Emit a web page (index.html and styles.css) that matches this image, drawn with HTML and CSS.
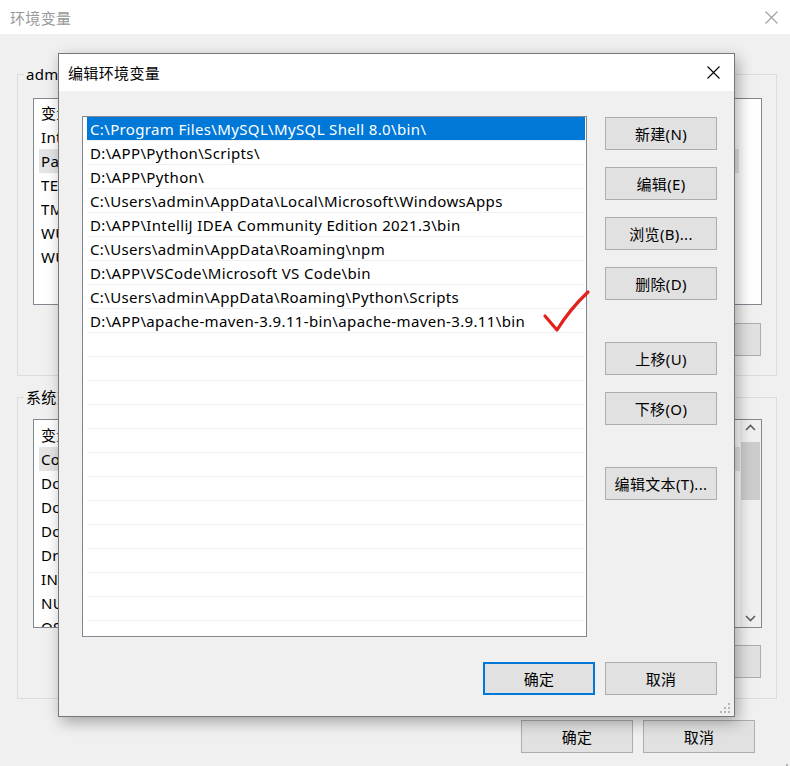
FILE: index.html
```html
<!DOCTYPE html>
<html lang="zh-CN">
<head>
  <meta charset="UTF-8">
  <meta name="viewport" content="width=device-width, initial-scale=1.0">
  <title>环境变量</title>
  <link rel="stylesheet" href="styles.css">
</head>
<body>
  <!-- the parent window: 环境变量 -->
  <div class="window">
    <div class="titlebar">
      <span class="title">环境变量</span>
      <svg class="close" width="13" height="13" viewBox="0 0 13 13"><path d="M0.5 0.5 L12.5 12.5 M12.5 0.5 L0.5 12.5" stroke="#a0a0a0" stroke-width="1.1"/></svg>
    </div>
    <div class="content">
      <fieldset class="group">
        <legend>admin 的用户变量(U)</legend>
        <div class="varlist">
          <div class="varrow"><span class="col-name">变量</span><span>值</span></div>
          <div class="varrow"><span class="col-name">IntelliJ IDEA Community Edition</span><span>D:\APP\IntelliJ IDEA 2021.3\bin;</span></div>
          <div class="varrow sel"><span class="col-name">Path</span><span>C:\Program Files\MySQL\MySQL Shell 8.0\bin\;</span></div>
          <div class="varrow"><span class="col-name">TEMP</span><span>%USERPROFILE%\AppData\Local\Temp</span></div>
          <div class="varrow"><span class="col-name">TMP</span><span>%USERPROFILE%\AppData\Local\Temp</span></div>
          <div class="varrow"><span class="col-name">WUBI_HOME</span><span>D:\APP\Wubi</span></div>
          <div class="varrow"><span class="col-name">WUBI_DATA</span><span>D:\APP\Wubi\data</span></div>
        </div>
        <div class="group-buttons">
          <button>新建(N)...</button>
          <button>编辑(E)...</button>
          <button>删除(D)</button>
        </div>
      </fieldset>

      <fieldset class="group second">
        <legend>系统变量(S)</legend>
        <div class="varlist scrolled">
          <div class="rows">
            <div class="varrow"><span class="col-name">变量</span><span>值</span></div>
            <div class="varrow sel"><span class="col-name">ComSpec</span><span>C:\Windows\system32\cmd.exe</span></div>
            <div class="varrow"><span class="col-name">DokanLibrary1</span><span>C:\Program Files\Dokan\</span></div>
            <div class="varrow"><span class="col-name">DokanLibrary1_LibraryPath_x64</span><span>C:\Program Files\Dokan\lib\</span></div>
            <div class="varrow"><span class="col-name">DokanLibrary1_LibraryPath_x86</span><span>C:\Program Files\Dokan\x86\</span></div>
            <div class="varrow"><span class="col-name">DriverData</span><span>C:\Windows\System32\Drivers</span></div>
            <div class="varrow"><span class="col-name">INTEL_DEV_REDIST</span><span>C:\Program Files (x86)\Intel\</span></div>
            <div class="varrow"><span class="col-name">NUMBER_OF_PROCESSORS</span><span>12</span></div>
            <div class="varrow"><span class="col-name">OS</span><span>Windows_NT</span></div>
          </div>
          <div class="scrollbar">
            <svg class="arrow" width="21" height="17" viewBox="0 0 21 17"><path d="M6 10 L10.5 5.5 L15 10" fill="none" stroke="#606060" stroke-width="1.6"/></svg>
            <div class="thumb"></div>
            <svg class="arrow down" width="21" height="17" viewBox="0 0 21 17"><path d="M6 6 L10.5 10.5 L15 6" fill="none" stroke="#606060" stroke-width="1.6"/></svg>
          </div>
        </div>
        <div class="group-buttons">
          <button>新建(W)...</button>
          <button>编辑(I)...</button>
          <button>删除(L)</button>
        </div>
      </fieldset>

      <div class="footer">
        <button>确定</button>
        <button>取消</button>
      </div>
    </div>
    <svg class="grip window-grip" width="11" height="11" viewBox="0 0 11 11"><path d="M8 0h2v2h-2z M4 4h2v2h-2z M8 4h2v2h-2z M0 8h2v2h-2z M4 8h2v2h-2z M8 8h2v2h-2z" fill="#b4b4b4"/></svg>
  </div>

  <!-- the child dialog: 编辑环境变量 -->
  <div class="dialog">
    <div class="dlg-titlebar">
      <span>编辑环境变量</span>
      <svg class="close" width="13" height="13" viewBox="0 0 13 13"><path d="M0.5 0.5 L12.5 12.5 M12.5 0.5 L0.5 12.5" stroke="#000" stroke-width="1.1"/></svg>
    </div>
    <div class="dlg-body">
      <div class="pathlist">
        <div class="pathrow sel">C:\Program Files\MySQL\MySQL Shell 8.0\bin\</div>
        <div class="pathrow">D:\APP\Python\Scripts\</div>
        <div class="pathrow">D:\APP\Python\</div>
        <div class="pathrow">C:\Users\admin\AppData\Local\Microsoft\WindowsApps</div>
        <div class="pathrow">D:\APP\IntelliJ IDEA Community Edition 2021.3\bin</div>
        <div class="pathrow">C:\Users\admin\AppData\Roaming\npm</div>
        <div class="pathrow">D:\APP\VSCode\Microsoft VS Code\bin</div>
        <div class="pathrow">C:\Users\admin\AppData\Roaming\Python\Scripts</div>
        <div class="pathrow">D:\APP\apache-maven-3.9.11-bin\apache-maven-3.9.11\bin</div>
        <div class="pathrow"></div>
        <div class="pathrow"></div>
        <div class="pathrow"></div>
        <div class="pathrow"></div>
        <div class="pathrow"></div>
        <div class="pathrow"></div>
        <div class="pathrow"></div>
        <div class="pathrow"></div>
        <div class="pathrow"></div>
        <div class="pathrow"></div>
        <div class="pathrow"></div>
        <div class="pathrow"></div>
      </div>
      <div class="side-buttons">
        <button>新建(N)</button>
        <button>编辑(E)</button>
        <button>浏览(B)...</button>
        <button>删除(D)</button>
        <button class="spaced">上移(U)</button>
        <button>下移(O)</button>
        <button class="spaced">编辑文本(T)...</button>
      </div>
    </div>
    <div class="dlg-footer">
      <button class="default">确定</button>
      <button>取消</button>
    </div>
    <svg class="grip" width="11" height="11" viewBox="0 0 11 11"><path d="M8 0h2v2h-2z M4 4h2v2h-2z M8 4h2v2h-2z M0 8h2v2h-2z M4 8h2v2h-2z M8 8h2v2h-2z" fill="#b4b4b4"/></svg>
  </div>

  <!-- red tick drawn on the screenshot -->
  <svg class="tick" width="52" height="48" viewBox="0 0 52 48"><path d="M5 28 Q11 35 17 42 Q30 21 48 4" fill="none" stroke="#e3201b" stroke-width="3.2" stroke-linecap="round" stroke-linejoin="round"/></svg>
</body>
</html>
```

FILE: styles.css
```css
* {
  box-sizing: border-box;
}
body {
  margin: 0;
  font-family: "Noto Sans", "Noto Sans CJK SC", sans-serif;
  font-size: 15px;
  letter-spacing: 0.35px;
  color: #000;
  background: #f0f0f0;
}
button {
  font: inherit;
  letter-spacing: inherit;
  color: #000;
  width: 112px;
  height: 33px;
  padding: 0;
  background: #e1e1e1;
  border: 1px solid #adadad;
}
button.default {
  border: 2px solid #0078d7;
}

/* parent window */
.window {
  position: relative;
  width: 790px;
  height: 766px;
  overflow: hidden;
  background: #f0f0f0;
}
.titlebar {
  height: 34px;
  background: #fff;
  display: flex;
  align-items: center;
  justify-content: space-between;
  padding: 0 12px 0 10px;
}
.titlebar .title {
  color: #999;
}
.content {
  padding: 30px 13px 0 17px;
}
.group {
  margin: 0;
  border: 1px solid #dcdcdc;
  padding: 14px 14px 19px 15px;
  min-width: 0;
}
.group legend {
  margin-left: -9px;
  padding: 0 2px;
  line-height: 20px;
}
.group.second {
  margin-top: 11px;
  padding-top: 12px;
  padding-bottom: 20px;
}
.varlist {
  height: 207px;
  background: #fff;
  border: 1px solid #828790;
  padding: 2px 22px 0 5px;
  overflow: hidden;
}
.varlist.scrolled {
  height: 209px;
  display: flex;
  padding: 0 0 0 5px;
}
.varlist .rows {
  flex: 1;
  padding-top: 3px;
  overflow: hidden;
}
.varrow {
  height: 24px;
  line-height: 24px;
  padding-left: 2px;
  white-space: nowrap;
  overflow: hidden;
}
.varrow.sel {
  background: #e5e5e5;
}
.col-name {
  display: inline-block;
  width: 250px;
}
.scrollbar {
  width: 21px;
  background: #f0f0f0;
  display: flex;
  flex-direction: column;
}
.scrollbar .arrow {
  display: block;
}
.scrollbar .thumb {
  height: 58px;
  margin: 5px 1px 0 1px;
  background: #cdcdcd;
}
.scrollbar .down {
  margin-top: auto;
}
.group-buttons {
  display: flex;
  justify-content: flex-end;
  gap: 10px;
  margin-top: 18px;
  margin-right: 1px;
}
.group.second .group-buttons {
  margin-top: 17px;
}
.footer {
  display: flex;
  justify-content: flex-end;
  gap: 10px;
  margin-top: 21px;
  margin-right: 22px;
}
.grip {
  position: absolute;
  right: 3px;
  bottom: 2px;
}
.window-grip {
  right: -3px;
  bottom: -5px;
}

/* child dialog */
.dialog {
  position: absolute;
  left: 58px;
  top: 53px;
  width: 677px;
  height: 664px;
  background: #f0f0f0;
  border: 1px solid #777;
  box-shadow: 3px 5px 14px rgba(0, 0, 0, 0.32);
}
.dlg-titlebar {
  height: 37px;
  background: #fff;
  display: flex;
  align-items: center;
  justify-content: space-between;
  padding: 0 14px 0 9px;
}
.dlg-body {
  display: flex;
  gap: 18px;
  padding: 25px 17px 0 23px;
}
.pathlist {
  width: 505px;
  height: 521px;
  background: #fff;
  border: 1px solid #828790;
  padding: 0 1px 0 4px;
  overflow: hidden;
}
.pathrow {
  height: 24px;
  line-height: 23px;
  padding: 1px 0 0 3px;
  border-bottom: 1px solid #efefef;
  white-space: nowrap;
}
.pathrow.sel {
  background: #0078d7;
  color: #fff;
}
.side-buttons {
  display: flex;
  flex-direction: column;
  gap: 17px;
  margin-top: 1px;
}
.side-buttons .spaced {
  margin-top: 25px;
}
.dlg-footer {
  display: flex;
  justify-content: flex-end;
  gap: 10px;
  padding: 25px 17px 0 0;
}

.tick {
  position: absolute;
  left: 540px;
  top: 288px;
}
```
